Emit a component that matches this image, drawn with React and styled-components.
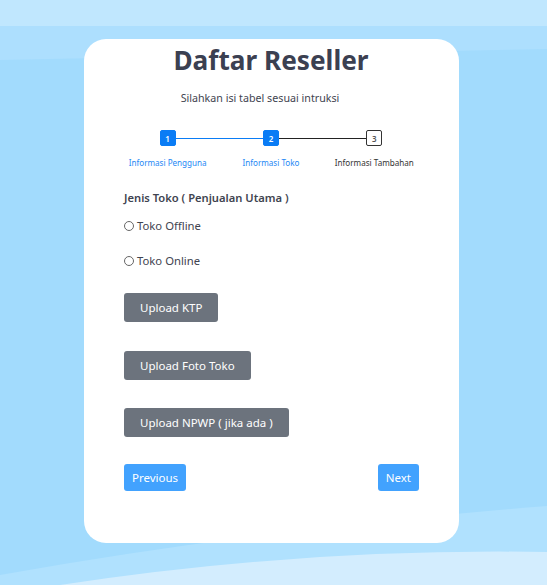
import React from 'react';
import styled, { createGlobalStyle } from 'styled-components';

const GlobalStyle = createGlobalStyle`
  body {
    margin: 0;
    font-family: "Noto Sans", "Open Sans", sans-serif;
  }
`;

const Page = styled.div`
  position: relative;
  min-height: 585px;
  overflow: hidden;
  background: #a2dbfd;
  padding-top: 39px;
  padding-right: 4px;
  box-sizing: border-box;
`;

const Waves = styled.svg`
  position: absolute;
  inset: 0;
  width: 100%;
  height: 100%;
`;

const Card = styled.div`
  position: relative;
  width: 375px;
  height: 504px;
  margin: 0 auto;
  background: #fff;
  border-radius: 22px;
  padding: 3px 33px 0 32px;
  box-sizing: border-box;
`;

const Title = styled.h1`
  margin: 0;
  text-align: center;
  font-size: 26.2px;
  line-height: 36px;
  font-weight: 700;
  color: #3b4051;
`;

const Subtitle = styled.p`
  margin: 12px 0 0;
  padding-right: 22px;
  text-align: center;
  font-size: 10.7px;
  line-height: 16px;
  color: #3f4450;
`;

const Stepper = styled.div`
  display: grid;
  grid-template-columns: repeat(3, 1fr);
  margin-top: 24px;
`;

const Step = styled.div`
  position: relative;
  display: flex;
  flex-direction: column;
  align-items: center;
`;

const StepLine = styled.div`
  position: absolute;
  top: 8px;
  left: 50%;
  width: 100%;
  height: 1px;
  background: ${p => (p.$active ? '#0a7cf5' : '#222')};
`;

const StepBox = styled.div`
  position: relative;
  z-index: 1;
  width: 16px;
  height: 16px;
  box-sizing: border-box;
  border-radius: 2px;
  display: flex;
  align-items: center;
  justify-content: center;
  font-size: 8px;
  font-weight: 600;
  background: ${p => (p.$active ? '#0a7cf5' : '#fff')};
  color: ${p => (p.$active ? '#fff' : '#555')};
  border: 1px solid ${p => (p.$active ? '#0a7cf5' : '#333')};
`;

const StepLabel = styled.div`
  margin-top: 11px;
  font-size: 8.1px;
  line-height: 12px;
  white-space: nowrap;
  color: ${p => (p.$active ? '#1e88f5' : '#333')};
`;

const Form = styled.div`
  padding: 0 7px 0 8px;
`;

const SectionLabel = styled.div`
  margin-top: 21px;
  font-size: 11.2px;
  line-height: 16px;
  font-weight: 600;
  color: #3f4450;
`;

const RadioRow = styled.label`
  display: flex;
  align-items: center;
  gap: 3px;
  margin-top: ${p => p.$gap}px;
  font-size: 11.3px;
  line-height: 16px;
  color: #3f4450;
`;

const Radio = styled.span`
  width: 8px;
  height: 8px;
  border: 1px solid #666;
  border-radius: 50%;
`;

const UploadButton = styled.button`
  display: block;
  height: 29px;
  margin-top: ${p => p.$gap}px;
  padding: 0 16px;
  border: none;
  border-radius: 3px;
  background: #6c737d;
  color: #fff;
  font-family: inherit;
  font-size: 11.5px;
`;

const NavRow = styled.div`
  display: flex;
  justify-content: space-between;
  margin-top: 27px;
`;

const NavButton = styled.button`
  height: 27px;
  padding: 0 8px;
  border: none;
  border-radius: 3px;
  background: #42a2fe;
  color: #fff;
  font-family: inherit;
  font-size: 11.5px;
`;

const steps = [
  { n: 1, label: 'Informasi Pengguna', active: true, line: 'active' },
  { n: 2, label: 'Informasi Toko', active: true, line: 'idle' },
  { n: 3, label: 'Informasi Tambahan', active: false },
];

export default function App() {
  return (
    <>
      <GlobalStyle />
      <Page>
        <Waves viewBox="0 0 547 585" preserveAspectRatio="none">
          <rect x="0" y="0" width="547" height="60" fill="#addffe" />
          <rect x="0" y="0" width="547" height="26" fill="#c0e7fe" />
          <path d="M0 60 L547 49 L547 60 Z" fill="#a2dbfd" />
          <path d="M0 585 L0 575 Q250 530 547 506 L547 585 Z" fill="#b0e1fe" />
          <path d="M0 585 L60 585 Q300 548 547 552 L547 585 Z" fill="#d3edfe" />
        </Waves>
        <Card>
          <Title>Daftar Reseller</Title>
          <Subtitle>Silahkan isi tabel sesuai intruksi</Subtitle>
          <Stepper>
            {steps.map(s => (
              <Step key={s.n}>
                {s.line && <StepLine $active={s.line === 'active'} />}
                <StepBox $active={s.active}>{s.n}</StepBox>
                <StepLabel $active={s.active}>{s.label}</StepLabel>
              </Step>
            ))}
          </Stepper>
          <Form>
            <SectionLabel>Jenis Toko ( Penjualan Utama )</SectionLabel>
            <RadioRow $gap={12}>
              <Radio />
              Toko Offline
            </RadioRow>
            <RadioRow $gap={19}>
              <Radio />
              Toko Online
            </RadioRow>
            <UploadButton $gap={24}>Upload KTP</UploadButton>
            <UploadButton $gap={29}>Upload Foto Toko</UploadButton>
            <UploadButton $gap={28}>Upload NPWP ( jika ada )</UploadButton>
            <NavRow>
              <NavButton>Previous</NavButton>
              <NavButton>Next</NavButton>
            </NavRow>
          </Form>
        </Card>
      </Page>
    </>
  );
}
